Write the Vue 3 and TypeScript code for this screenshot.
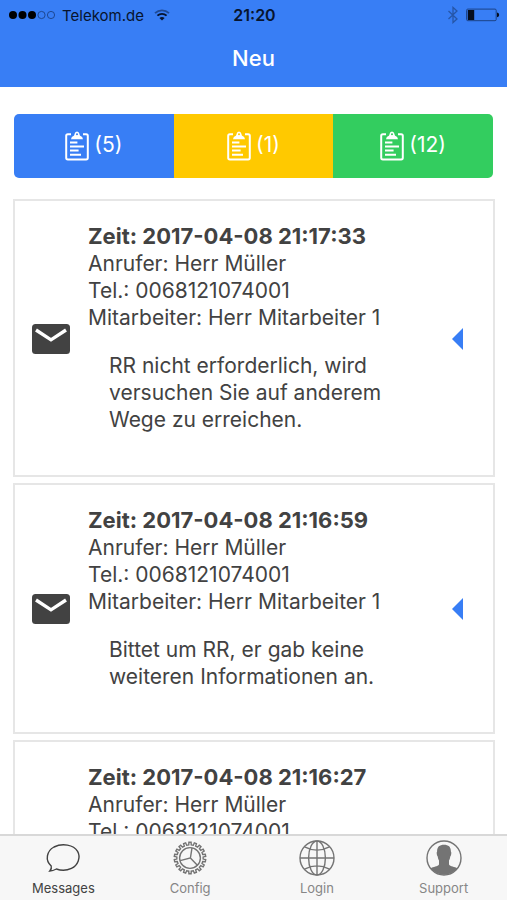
<script setup lang="ts">
import { ref } from 'vue'

interface Message {
  id: number
  time: string
  caller: string
  phone: string
  employee: string
  text: string
}

type TabIcon = 'chat' | 'gear' | 'globe' | 'person'

const counters = [
  { tone: 'blue', label: 'Neu', count: 5 },
  { tone: 'yellow', label: 'In Bearbeitung', count: 1 },
  { tone: 'green', label: 'Erledigt', count: 12 },
]

const messages: Message[] = [
  {
    id: 1,
    time: '2017-04-08 21:17:33',
    caller: 'Herr Müller',
    phone: '0068121074001',
    employee: 'Herr Mitarbeiter 1',
    text: 'RR nicht erforderlich, wird versuchen Sie auf anderem Wege zu erreichen.',
  },
  {
    id: 2,
    time: '2017-04-08 21:16:59',
    caller: 'Herr Müller',
    phone: '0068121074001',
    employee: 'Herr Mitarbeiter 1',
    text: 'Bittet um RR, er gab keine weiteren Informationen an.',
  },
  {
    id: 3,
    time: '2017-04-08 21:16:27',
    caller: 'Herr Müller',
    phone: '0068121074001',
    employee: '',
    text: '',
  },
]

const tabs: { name: string; icon: TabIcon }[] = [
  { name: 'Messages', icon: 'chat' },
  { name: 'Config', icon: 'gear' },
  { name: 'Login', icon: 'globe' },
  { name: 'Support', icon: 'person' },
]

const activeTab = ref('Messages')

/** Outline of a cog with square teeth, centred on 18,18. */
function cogPath(teeth: number, inner: number, outer: number): string {
  const step = (Math.PI * 2) / teeth
  const point = (r: number, a: number) =>
    `${(18 + r * Math.sin(a)).toFixed(2)} ${(18 - r * Math.cos(a)).toFixed(2)}`
  const parts: string[] = []
  for (let i = 0; i < teeth; i++) {
    const a = i * step
    parts.push(
      point(inner, a - step * 0.27),
      point(outer, a - step * 0.2),
      point(outer, a + step * 0.2),
      point(inner, a + step * 0.27),
    )
  }
  return `M${parts.join('L')}Z`
}

const cog = cogPath(18, 13.2, 15.8)
</script>

<template>
  <div class="app">
    <header class="header">
      <div class="status">
        <div class="carrier">
          <svg class="signal" viewBox="0 0 46 10" aria-hidden="true">
            <circle cx="4" cy="5" r="4" />
            <circle cx="13.5" cy="5" r="4" />
            <circle cx="23" cy="5" r="4" />
            <circle class="ring" cx="32.5" cy="5" r="3.6" />
            <circle class="ring" cx="42" cy="5" r="3.6" />
          </svg>
          <span>Telekom.de</span>
          <svg class="wifi" viewBox="0 0 16 12" aria-hidden="true">
            <path class="faint" d="M1 4.2C5 .3 11 .3 15 4.2" />
            <path d="M3.4 6.7C6 4.2 10 4.2 12.6 6.7" />
            <path class="dot" d="M8 11.6L5.4 8.9Q8 6.9 10.6 8.9Z" />
          </svg>
        </div>
        <span class="clock">21:20</span>
        <div class="power">
          <svg class="bluetooth" viewBox="0 0 12 18" aria-hidden="true">
            <path d="M1.5 5L10 13L6 16.6V1.4L10 5L1.5 13" />
          </svg>
          <svg class="battery" viewBox="0 0 34 14" aria-hidden="true">
            <rect class="shell" x=".6" y="1.1" width="29.6" height="11.6" rx="1.2" />
            <rect x="1.8" y="2" width="6.4" height="10" />
            <path d="M31 4.6Q33.2 5 33.2 6.9T31 9.2Z" />
          </svg>
        </div>
      </div>
      <h1>Neu</h1>
    </header>

    <main class="content">
      <nav class="counters">
        <button
          v-for="c in counters"
          :key="c.tone"
          type="button"
          :class="['counter', c.tone]"
          :aria-label="`${c.label} (${c.count})`"
        >
          <svg class="clipboard" viewBox="0 0 24 30" aria-hidden="true">
            <path d="M6 3.2H2.8Q1.2 3.2 1.2 4.8V26.8Q1.2 28.4 2.8 28.4H21.2Q22.8 28.4 22.8 26.8V4.8Q22.8 3.2 21.2 3.2H18" />
            <path
              class="clip"
              fill-rule="evenodd"
              d="M6 8.2Q6.2 5.8 8.8 4.8Q9.5 4.3 9.5 3Q10 .4 12 .4T14.5 3Q14.5 4.3 15.2 4.8Q17.8 5.8 18 8.2ZM12 2.2A1 1 0 1 0 12 4.2A1 1 0 1 0 12 2.2Z"
            />
            <path d="M5 11.4H12.4M5 15.4H19M5 19.6H13.6M5 23.8H16" />
          </svg>
          <span>({{ c.count }})</span>
        </button>
      </nav>

      <section class="list">
        <article v-for="m in messages" :key="m.id" class="card">
          <svg class="mail" viewBox="0 0 38 30" aria-hidden="true">
            <rect width="38" height="30" rx="3.5" />
            <path d="M4 6L19 15.8L34 6" />
          </svg>
          <div class="details">
            <strong>Zeit: {{ m.time }}</strong>
            <span>Anrufer: {{ m.caller }}</span>
            <span>Tel.: {{ m.phone }}</span>
            <span v-if="m.employee">Mitarbeiter: {{ m.employee }}</span>
            <p v-if="m.text">{{ m.text }}</p>
          </div>
          <button type="button" class="open" aria-label="Optionen">
            <svg viewBox="0 0 11 22" aria-hidden="true"><path d="M11 0V22L0 11Z" /></svg>
          </button>
        </article>
      </section>
    </main>

    <nav class="tabs">
      <button
        v-for="t in tabs"
        :key="t.name"
        type="button"
        :class="['tab', { active: t.name === activeTab }]"
        @click="activeTab = t.name"
      >
        <svg viewBox="0 0 36 36" aria-hidden="true">
          <g v-if="t.icon === 'chat'">
            <path d="M4.8 31Q7 28.6 6.2 26C-.2 20.4 1.6 11 9 7C17.4 2.8 28.6 4.8 32.6 11.4C36 17.4 33 25.2 26.4 28.4C21.6 30.7 16 30.7 11.4 29Q7.8 30.9 4.8 31Z" />
          </g>
          <g v-else-if="t.icon === 'gear'">
            <path :d="cog" />
            <circle cx="18" cy="18" r="10.4" />
            <path d="M20 7.8L18.4 18L8.2 20.6M18.4 18L25.6 25.4" />
          </g>
          <g v-else-if="t.icon === 'globe'">
            <circle cx="18" cy="18" r="17" />
            <ellipse cx="18" cy="18" rx="8.4" ry="17" />
            <path d="M18 1V35M1 18H35M5.6 6.8Q18 13.4 30.4 6.8M5.6 29.2Q18 22.6 30.4 29.2" />
          </g>
          <g v-else>
            <circle cx="18" cy="18" r="17" />
            <path
              class="solid"
              d="M18 4.8C22.6 4.8 25 7 24.9 11.6Q25.5 12.2 25.2 14.2Q25 15.6 24.4 16.2Q24 18.8 23 20.4V24.4C24.2 26.4 28.8 26.6 31.4 28.2A17 17 0 0 1 4.6 28.2C7.2 26.6 11.8 26.4 13 24.4V20.4Q12 18.8 11.6 16.2Q11 15.6 10.8 14.2Q10.5 12.2 11.1 11.6C11 7 13.4 4.8 18 4.8Z"
            />
          </g>
        </svg>
        <span>{{ t.name }}</span>
      </button>
    </nav>
  </div>
</template>

<style>
body {
  margin: 0;
}
</style>

<style scoped>
.app {
  display: flex;
  flex-direction: column;
  height: 100vh;
  overflow: hidden;
  background: #fff;
  color: #424242;
  font-family: Inter, 'Liberation Sans', sans-serif;
}

button {
  margin: 0;
  padding: 0;
  border: 0;
  background: none;
  font: inherit;
  color: inherit;
  cursor: pointer;
}

svg {
  display: block;
}

.header {
  flex: none;
  background: #387ef5;
  padding-bottom: 1px;
}

.status {
  display: grid;
  grid-template-columns: 1fr auto 1fr;
  align-items: center;
  height: 30px;
  padding: 0 7px 0 9px;
  color: #07142e;
  font-size: 15px;
}

.carrier,
.power {
  display: flex;
  align-items: center;
  gap: 7px;
}

.power {
  justify-content: flex-end;
}

.clock {
  font-size: 16px;
  font-weight: 600;
}

.signal {
  width: 46px;
  height: 10px;
}

.signal .ring {
  fill: none;
  stroke: #173a78;
  stroke-width: 0.8;
}

.wifi {
  width: 16px;
  height: 12px;
  margin-left: 3px;
  fill: none;
  stroke: #07142e;
  stroke-width: 1.8;
}

.wifi .faint {
  stroke: #1f4a95;
}

.wifi .dot {
  fill: #07142e;
  stroke: none;
}

.bluetooth {
  width: 12px;
  height: 18px;
  fill: none;
  stroke: #2656a8;
  stroke-width: 1.3;
}

.battery {
  width: 34px;
  height: 14px;
  fill: #050d1e;
}

.battery .shell {
  fill: none;
  stroke: #1c4286;
  stroke-width: 1;
}

h1 {
  margin: 0;
  color: #fff;
  font-size: 22px;
  font-weight: 500;
  line-height: 56px;
  text-align: center;
}

.content {
  flex: 1;
  min-height: 0;
  overflow: hidden;
  padding: 27px 12px 0 13px;
}

.counters {
  display: flex;
  margin: 0 2px 21px 1px;
  border-radius: 5px;
  overflow: hidden;
}

.counter {
  flex: 1;
  display: flex;
  align-items: center;
  justify-content: center;
  gap: 5px;
  height: 64px;
  color: #fff;
  font-size: 21px;
}

.counter span {
  padding-bottom: 3px;
}

.blue {
  background: #387ef5;
}

.yellow {
  background: #ffc900;
}

.green {
  background: #33cd5f;
}

.clipboard {
  width: 24px;
  height: 30px;
  fill: none;
  stroke: #fff;
  stroke-width: 2;
}

.clipboard .clip {
  fill: #fff;
  stroke: none;
}

.list {
  display: flex;
  flex-direction: column;
  gap: 6px;
}

.card {
  display: flex;
  align-items: center;
  padding: 22px 25px 21px 17px;
  border: 2px solid #e6e6e6;
  font-size: 21px;
  line-height: 27px;
}

/* The last card continues below the tab bar. */
.card:last-child .mail,
.card:last-child .open {
  visibility: hidden;
}

.mail {
  flex: none;
  width: 38px;
  height: 30px;
  margin-right: 18px;
  fill: #424242;
}

.mail path {
  fill: none;
  stroke: #fff;
  stroke-width: 3.4;
}

.details {
  flex: 1;
  display: flex;
  flex-direction: column;
}

.details strong {
  font-size: 22px;
  font-weight: 700;
}

.details p {
  margin: 21px;
}

.open {
  flex: none;
  padding: 0 5px;
}

.open svg {
  width: 11px;
  height: 22px;
  fill: #387ef5;
}

.tabs {
  flex: none;
  display: flex;
  border-top: 2px solid #d8d8d8;
  background: #f7f7f7;
}

.tab {
  flex: 1;
  display: flex;
  flex-direction: column;
  align-items: center;
  gap: 3px;
  padding: 4px 0 2px;
  color: #868686;
  font-size: 13px;
  line-height: 19px;
}

.tab.active {
  color: #424242;
}

.tab svg {
  width: 36px;
  height: 36px;
  fill: none;
  stroke: #747474;
  stroke-width: 1.4;
}

.tab.active svg {
  stroke: #424242;
}

.tab .solid {
  fill: #747474;
  stroke: none;
}
</style>
